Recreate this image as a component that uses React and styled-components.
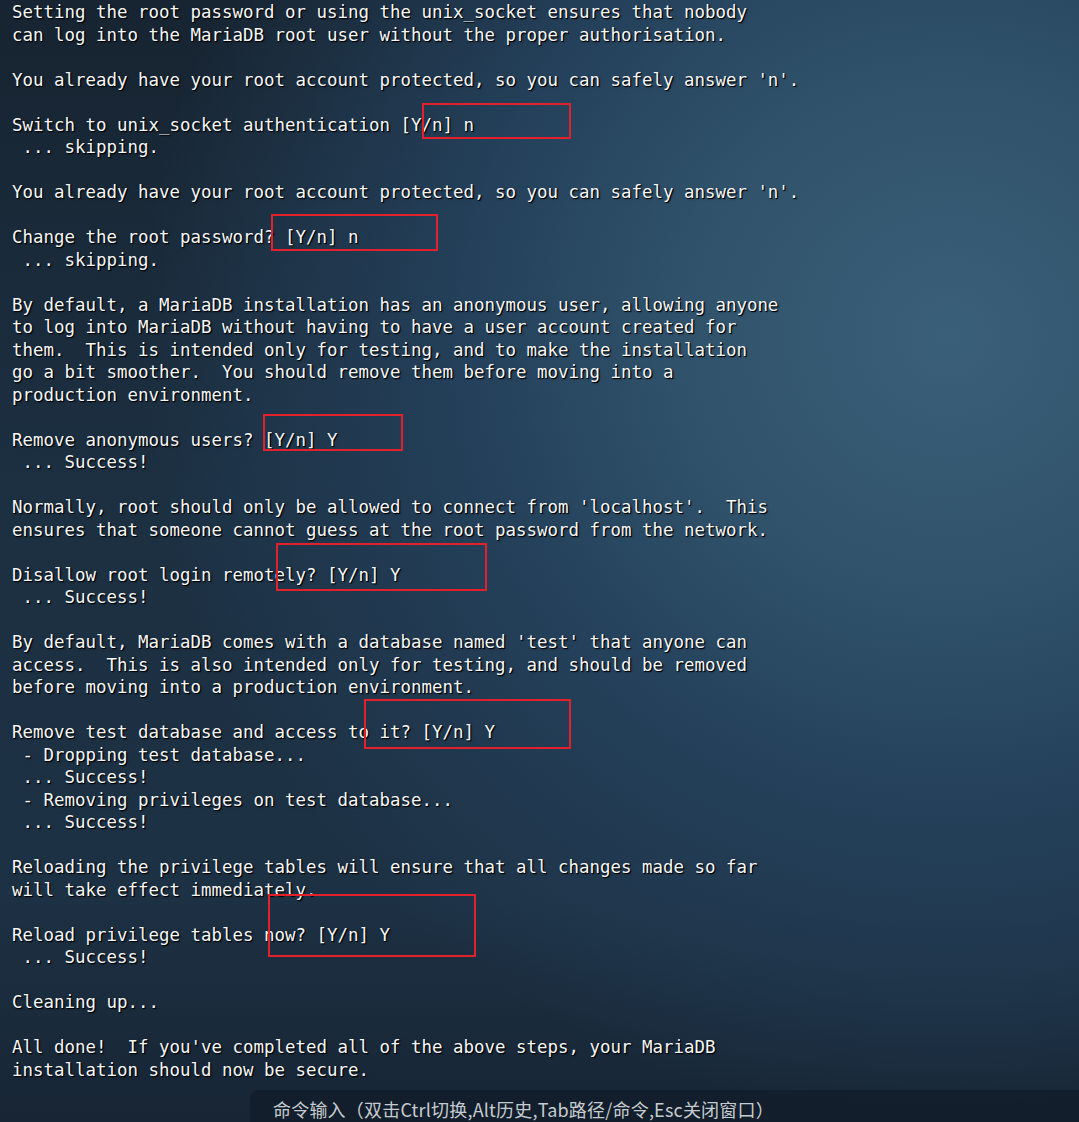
import styled, { createGlobalStyle } from 'styled-components'

const GlobalStyle = createGlobalStyle`
  html, body {
    margin: 0;
    padding: 0;
    overflow: hidden;
  }
`

const output = `Setting the root password or using the unix_socket ensures that nobody
can log into the MariaDB root user without the proper authorisation.

You already have your root account protected, so you can safely answer 'n'.

Switch to unix_socket authentication [Y/n] n
 ... skipping.

You already have your root account protected, so you can safely answer 'n'.

Change the root password? [Y/n] n
 ... skipping.

By default, a MariaDB installation has an anonymous user, allowing anyone
to log into MariaDB without having to have a user account created for
them.  This is intended only for testing, and to make the installation
go a bit smoother.  You should remove them before moving into a
production environment.

Remove anonymous users? [Y/n] Y
 ... Success!

Normally, root should only be allowed to connect from 'localhost'.  This
ensures that someone cannot guess at the root password from the network.

Disallow root login remotely? [Y/n] Y
 ... Success!

By default, MariaDB comes with a database named 'test' that anyone can
access.  This is also intended only for testing, and should be removed
before moving into a production environment.

Remove test database and access to it? [Y/n] Y
 - Dropping test database...
 ... Success!
 - Removing privileges on test database...
 ... Success!

Reloading the privilege tables will ensure that all changes made so far
will take effect immediately.

Reload privilege tables now? [Y/n] Y
 ... Success!

Cleaning up...

All done!  If you've completed all of the above steps, your MariaDB
installation should now be secure.`

// annotation boxes drawn over the screenshot
const marks = [
  { x: 422, y: 103, w: 149, h: 36 },
  { x: 271, y: 214, w: 167, h: 37 },
  { x: 263, y: 414, w: 140, h: 37 },
  { x: 276, y: 543, w: 211, h: 48 },
  { x: 364, y: 699, w: 207, h: 50 },
  { x: 268, y: 894, w: 208, h: 63 },
]

const Screen = styled.div`
  width: 1079px;
  height: 1122px;
  display: flex;
  flex-direction: column;
  background:
    radial-gradient(ellipse 75% 70% at 88% 30%, #3a5f78 0%, #31546c 30%, #24405a 60%, rgba(26, 45, 64, 0) 100%),
    linear-gradient(180deg, #172431 0%, #1c3042 45%, #1d3144 80%, #172534 100%);
`

const Terminal = styled.div`
  position: relative;
  flex: 1;
  padding: 1px 0 0 12px;
`

const Output = styled.pre`
  margin: 0;
  font-family: "DejaVu Sans Mono", "Liberation Mono", monospace;
  font-size: 17.45px;
  line-height: 22.5px;
  color: #f6f7f8;
  text-shadow: 1px 1px 0 #000, 1px 1px 2px rgba(0, 0, 0, 0.7);
  white-space: pre;
`

const Mark = styled.div`
  position: absolute;
  border: 2px solid #e3212b;
  box-sizing: border-box;
`

const CommandBar = styled.div`
  margin-left: 250px;
  height: 32px;
  display: flex;
  align-items: center;
  padding: 6px 0 0 23px;
  box-sizing: border-box;
  background: rgba(16, 28, 40, 0.72);
  border-top-left-radius: 9px;
  font-family: "Noto Sans CJK SC", "Noto Sans", sans-serif;
  font-size: 18px;
  letter-spacing: 0.2px;
  color: #c6cbd0;
`

function App() {
  return (
    <Screen>
      <GlobalStyle />
      <Terminal>
        <Output>{output}</Output>
        {marks.map((m, i) => (
          <Mark
            key={i}
            style={{ left: m.x, top: m.y, width: m.w, height: m.h }}
          />
        ))}
      </Terminal>
      <CommandBar>命令输入（双击Ctrl切换,Alt历史,Tab路径/命令,Esc关闭窗口）</CommandBar>
    </Screen>
  )
}

export default App
